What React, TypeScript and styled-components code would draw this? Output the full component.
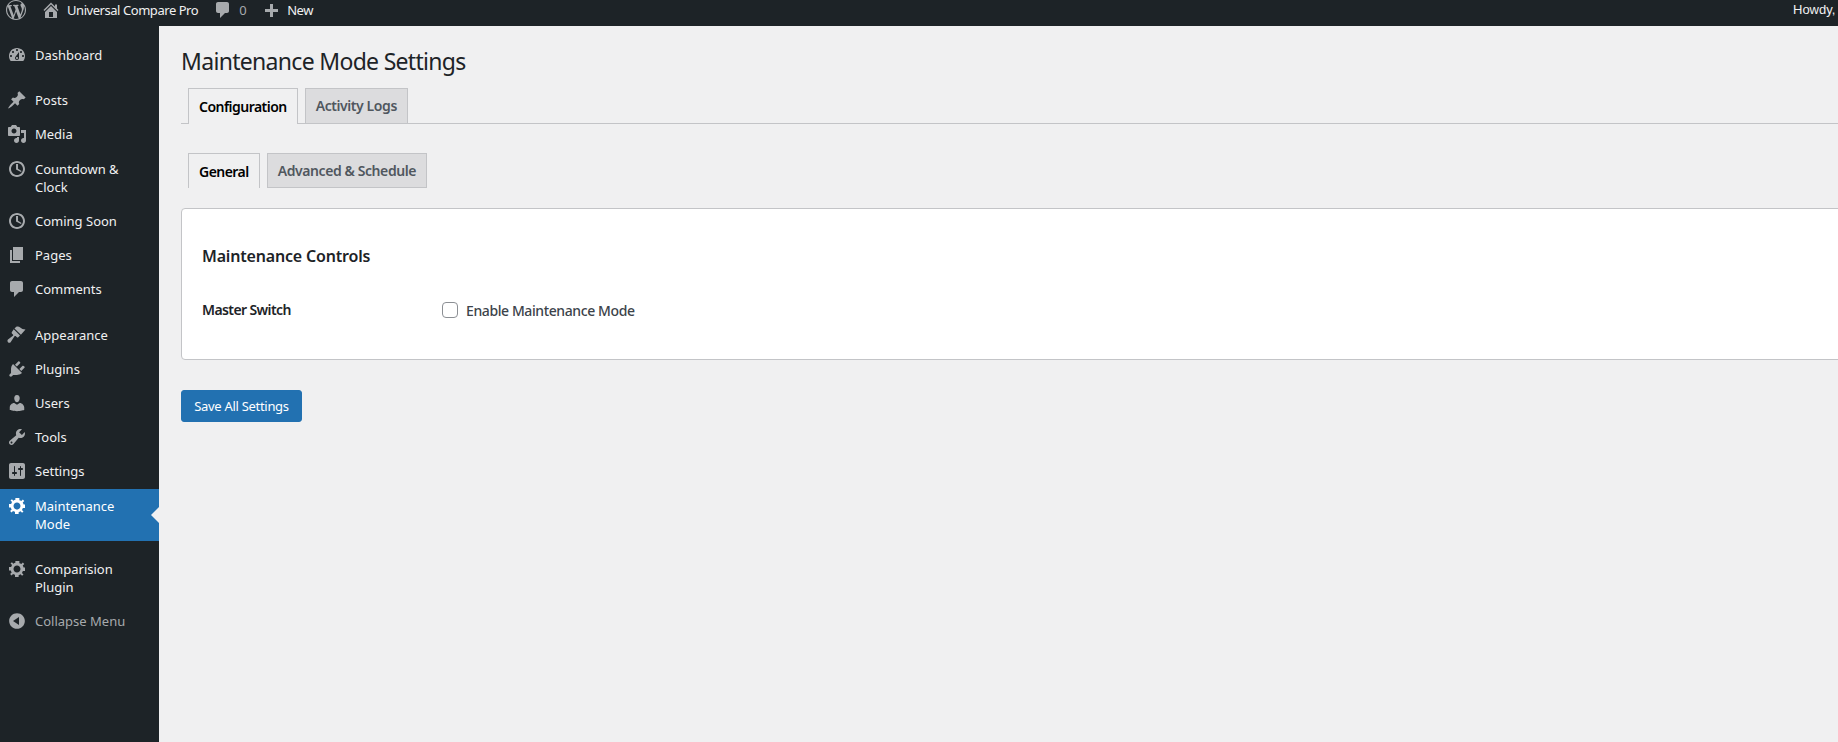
import styled, { createGlobalStyle } from "styled-components";

const GlobalStyle = createGlobalStyle`
  html, body {
    margin: 0;
    padding: 0;
    background: #f0f0f1;
  }
  * {
    box-sizing: border-box;
  }
`;

const icons: Record<string, string> = {
  wordpress:
    "M20 10c0-5.51-4.49-10-10-10C4.48 0 0 4.49 0 10c0 5.52 4.48 10 10 10 5.51 0 10-4.48 10-10zM7.78 15.37L4.37 6.22c.55-.02 1.17-.08 1.17-.08.5-.06.44-1.13-.06-1.11 0 0-1.45.11-2.37.11-.18 0-.37 0-.58-.01C4.12 2.69 6.87 1.11 10 1.11c2.33 0 4.45.87 6.05 2.34-.68-.11-1.65.39-1.65 1.58 0 .74.45 1.36.9 2.1.35.61.55 1.36.55 2.46 0 1.49-1.4 5-1.4 5l-3.03-8.35c.54-.02.82-.17.82-.17.5-.05.44-1.25-.06-1.22 0 0-1.44.12-2.38.12-.87 0-2.33-.12-2.33-.12-.5-.03-.56 1.2-.06 1.22l.92.08 1.26 3.41zM17.41 10c.24-.64.74-1.87.43-4.25.7 1.29 1.05 2.71 1.05 4.25 0 3.29-1.73 6.24-4.4 7.78.97-2.59 1.94-5.2 2.92-7.78zM6.1 18.09C3.12 16.65 1.11 13.53 1.11 10c0-1.3.23-2.48.72-3.59C3.25 10.3 4.67 14.2 6.1 18.09zm4.03-6.63l2.58 6.98c-.87.28-1.76.45-2.71.45-.79 0-1.57-.11-2.29-.33.81-2.38 1.62-4.73 2.42-7.1z",
  home:
    "M16 8.5l1.53 1.53-1.06 1.06L10 4.62l-6.47 6.47-1.06-1.06L10 2.5l4 4v-2h2v4zm-6-2.46l6 5.99V18H4v-5.97zM12 17v-5H8v5h4z",
  comment:
    "M5 2h9c1.1 0 2 .9 2 2v7c0 1.1-.9 2-2 2h-2l-5 5v-5H5c-1.1 0-2-.9-2-2V4c0-1.1.9-2 2-2z",
  plus: "M17 9v3h-5v5H9v-5H4V9h5V4h3v5h5z",
  dashboard:
    "M3.76 16h12.48c1.1-1.37 1.76-3.11 1.76-5 0-4.42-3.58-8-8-8s-8 3.58-8 8c0 1.89.66 3.63 1.76 5zM10 4c.55 0 1 .45 1 1s-.45 1-1 1-1-.45-1-1 .45-1 1-1zM6 6c.55 0 1 .45 1 1s-.45 1-1 1-1-.45-1-1 .45-1 1-1zm8 0c.55 0 1 .45 1 1s-.45 1-1 1-1-.45-1-1 .45-1 1-1zm-5.37 5.55L12 7v6c0 1.1-.9 2-2 2s-2-.9-2-2c0-.57.24-1.08.63-1.45zM4 10c.55 0 1 .45 1 1s-.45 1-1 1-1-.45-1-1 .45-1 1-1zm12 0c.55 0 1 .45 1 1s-.45 1-1 1-1-.45-1-1 .45-1 1-1zm-5 3c0-.55-.45-1-1-1s-1 .45-1 1 .45 1 1 1 1-.45 1-1z",
  post:
    "M10.44 3.02l1.82-1.82 6.36 6.35-1.83 1.82c-1.05-.68-2.48-.57-3.41.36l-.75.75c-.92.93-1.04 2.35-.35 3.41l-1.83 1.82-2.41-2.41-2.8 2.79c-.42.42-3.38 2.71-3.8 2.29s1.86-3.39 2.28-3.81l2.79-2.79L4.1 9.36l1.83-1.82c1.05.69 2.48.57 3.4-.36l.75-.75c.93-.92 1.05-2.35.36-3.41z",
  media:
    "M13 11V4c0-.55-.45-1-1-1h-1.67L9 1H5L3.67 3H2c-.55 0-1 .45-1 1v7c0 .55.45 1 1 1h10c.55 0 1-.45 1-1zM7 4.5c1.38 0 2.5 1.12 2.5 2.5S8.38 9.5 7 9.5 4.5 8.38 4.5 7 5.62 4.5 7 4.5zM14 6h5v10.5c0 1.38-1.12 2.5-2.5 2.5S14 17.88 14 16.5s1.12-2.5 2.5-2.5c.17 0 .34.02.5.05V9h-3V6zm-4 8.05V13h2v3.5c0 1.38-1.12 2.5-2.5 2.5S7 17.88 7 16.5 8.12 14 9.5 14c.17 0 .34.02.5.05z",
  clock:
    "M10 2c4.42 0 8 3.58 8 8s-3.58 8-8 8-8-3.58-8-8 3.58-8 8-8zm0 14c3.31 0 6-2.69 6-6s-2.69-6-6-6-6 2.69-6 6 2.69 6 6 6zm-.71-5.29c.07.05.14.1.23.15L14 13l.5-.9-3.47-2.4V5h-2v5c0 .27.1.52.26.71z",
  page: "M6 15V2h10v13H6zm-1 1h8v2H3V5h2v11z",
  appearance:
    "M7.5 3.5L9 2c1.5-.8 3.2-.3 4.2.6 1.4 1.3 3 2 5.3 2l-4.6 5.2zM6.7 4.3L13 10.6l-1.7 1.7c-.4.4-1 .4-1.4 0l-1-1c-.5-.5-1-.4-1.4 0l-3.9 5.9c-.7.7-1.9.7-2.6 0s-.7-1.9 0-2.6l4.9-3.8c.4-.4.5-1 0-1.4l-1-1c-.4-.4-.4-1 0-1.4z",
  plugin:
    "M13.11 4.36L9.87 7.6 8 5.73l3.24-3.24c.35-.34 1.05-.2 1.56.32.52.51.66 1.21.31 1.55zm-8 1.77l.91-1.12 9.01 9.01-1.19.84c-.71.71-2.63 1.16-3.82 1.16H6.14L4.9 17.26c-.59.59-1.54.59-2.12 0-.59-.58-.59-1.53 0-2.12l1.24-1.24v-3.88c0-1.13.4-3.05 1.09-3.89zm7.26 3.97l3.24-3.24c.34-.35 1.04-.21 1.55.31.52.51.66 1.21.31 1.55l-3.24 3.25z",
  users:
    "M10 9.25c-2.27 0-2.73-3.44-2.73-3.44C7 4.02 7.82 2 9.97 2c2.16 0 2.98 2.02 2.71 3.81 0 0-.41 3.44-2.68 3.44zm0 2.57L12.72 10c2.39 0 4.52 2.33 4.52 4.53v2.49s-3.65 1.13-7.24 1.13c-3.65 0-7.24-1.13-7.24-1.13v-2.49c0-2.25 1.94-4.48 4.47-4.48z",
  tools:
    "M16.68 9.77c-1.34 1.34-3.3 1.67-4.95.99l-5.41 6.52c-.99.99-2.59.99-3.58 0s-.99-2.59 0-3.57l6.52-5.42c-.68-1.65-.35-3.61.99-4.95 1.28-1.28 3.12-1.62 4.72-1.06l-2.89 2.89 2.82 2.82 2.86-2.87c.53 1.58.18 3.42-1.08 4.67zM3.81 16.21c.4.39 1.04.39 1.43 0 .4-.4.4-1.04 0-1.43-.39-.4-1.03-.4-1.43 0-.39.39-.39 1.03 0 1.43z",
  settings:
    "M18 16V4c0-1.1-.9-2-2-2H4c-1.1 0-2 .9-2 2v12c0 1.1.9 2 2 2h12c1.1 0 2-.9 2-2zM8 11h1c.55 0 1 .45 1 1s-.45 1-1 1H8v1.5c0 .28-.22.5-.5.5s-.5-.22-.5-.5V13H6c-.55 0-1-.45-1-1s.45-1 1-1h1V5.5c0-.28.22-.5.5-.5s.5.22.5.5V11zm5-2h-1c-.55 0-1-.45-1-1s.45-1 1-1h1V5.5c0-.28.22-.5.5-.5s.5.22.5.5V7h1c.55 0 1 .45 1 1s-.45 1-1 1h-1v5.5c0 .28-.22.5-.5.5s-.5-.22-.5-.5V9z",
  gear:
    "M18 12h-2.18c-.17.7-.47 1.35-.87 1.92l1.54 1.54-1.41 1.41-1.54-1.54c-.57.4-1.22.7-1.92.87V18H8v-2.18c-.7-.17-1.35-.47-1.92-.87l-1.54 1.54-1.41-1.41 1.54-1.54c-.4-.57-.7-1.22-.87-1.92H2V8h2.18c.17-.7.47-1.35.87-1.92L3.51 4.54l1.41-1.41 1.54 1.54c.57-.4 1.22-.7 1.92-.87V2h4v2.18c.7.17 1.35.47 1.92.87l1.54-1.54 1.41 1.41-1.54 1.54c.4.57.7 1.22.87 1.92H18v4zm-8 1.5c1.93 0 3.5-1.57 3.5-3.5S11.93 6.5 10 6.5 6.5 8.07 6.5 10s1.57 3.5 3.5 3.5z",
  collapse:
    "M10 2.16c4.33 0 7.84 3.51 7.84 7.84s-3.51 7.84-7.84 7.84S2.16 14.33 2.16 10 5.67 2.16 10 2.16zM12 14V6l-6 4z",
};

const FONT = `"Noto Sans", "Open Sans", sans-serif`;

const Page = styled.div`
  display: flex;
  flex-direction: column;
  width: 100vw;
  height: 100vh;
  overflow: hidden;
  font-family: ${FONT};
  font-size: 13px;
  color: #1d2327;
`;

const AdminBar = styled.header`
  flex: 0 0 26px;
  display: flex;
  align-items: flex-start;
  background: #1d2327;
  color: #f0f0f1;
  letter-spacing: -0.45px;
  line-height: 20px;
  padding-left: 6px;
`;

const BarIcon = styled.svg<{ $size?: number }>`
  display: block;
  width: ${(p) => p.$size ?? 20}px;
  height: ${(p) => p.$size ?? 20}px;
  flex: none;
  fill: #a7aaad;
`;

const BarItem = styled.div<{ $left: number; $gap: number }>`
  display: flex;
  align-items: center;
  height: 20px;
  margin-left: ${(p) => p.$left}px;
  gap: ${(p) => p.$gap}px;
`;

const Muted = styled.span`
  color: #a7aaad;
`;

const Howdy = styled.div`
  margin-left: auto;
  width: 45px;
  white-space: nowrap;
  font-family: "Liberation Sans", Arial, sans-serif;
  letter-spacing: 0;
`;

const Body = styled.div`
  flex: 1;
  display: flex;
  min-height: 0;
`;

const Sidebar = styled.nav`
  flex: 0 0 159px;
  background: #1d2327;
  padding-top: 12px;
`;

const MenuItem = styled.a<{ $active?: boolean; $dim?: boolean }>`
  position: relative;
  display: flex;
  padding: 8px 12px 8px 0;
  line-height: 18.2px;
  color: ${(p) => (p.$active ? "#fff" : p.$dim ? "#a7aaad" : "#f0f0f1")};
  background: ${(p) => (p.$active ? "#2271b1" : "transparent")};

  svg {
    fill: ${(p) => (p.$active ? "#fff" : "#a7aaad")};
  }

  ${(p) =>
    p.$active &&
    `&::after {
      content: "";
      position: absolute;
      right: 0;
      top: 50%;
      margin-top: -8px;
      border: 8px solid transparent;
      border-right-color: #f0f0f1;
      border-left-width: 0;
    }`}
`;

const MenuIcon = styled.svg`
  display: block;
  flex: none;
  width: 20px;
  height: 20px;
  margin: -1px 8px -1px 7px;
`;

const Separator = styled.div`
  height: 11px;
`;

const Content = styled.main`
  flex: 1;
  min-width: 0;
  overflow: hidden;
  padding-left: 22px;
`;

const Wrap = styled.div`
  width: 1750px;
`;

const Title = styled.h1`
  margin: 0;
  padding-top: 20px;
  font-size: 23px;
  font-weight: 400;
  line-height: 30px;
  letter-spacing: -0.69px;
  color: #1d2327;
`;

const TabRow = styled.div<{ $top: number; $line?: boolean }>`
  display: flex;
  gap: 7px;
  margin-top: ${(p) => p.$top}px;
  padding-left: 7px;
  height: 36px;
  border-bottom: ${(p) => (p.$line ? "1px solid #c3c4c7" : "0")};
`;

const Tab = styled.div<{ $active?: boolean; $tall?: boolean }>`
  height: ${(p) => (p.$tall ? 36 : 35)}px;
  padding: 0 10px ${(p) => (p.$tall ? 1 : 0)}px;
  display: flex;
  align-items: center;
  font-size: 14px;
  font-weight: 600;
  letter-spacing: ${(p) => (p.$active ? "-0.53px" : "-0.42px")};
  white-space: nowrap;
  border: 1px solid #c3c4c7;
  border-bottom: ${(p) => (p.$active ? "0" : "1px solid #c3c4c7")};
  background: ${(p) => (p.$active ? "#f0f0f1" : "#dcdcde")};
  color: ${(p) => (p.$active ? "#000" : "#50575e")};
`;

const Card = styled.section`
  margin-top: 19px;
  height: 152px;
  padding: 35px 20px 0;
  background: #fff;
  border: 1px solid #c3c4c7;
  border-radius: 4px;
`;

const CardTitle = styled.h2`
  margin: 0 0 28px;
  font-size: 16px;
  font-weight: 600;
  line-height: 24px;
  letter-spacing: -0.18px;
  color: #1d2327;
`;

const FieldRow = styled.div`
  display: grid;
  grid-template-columns: 240px 1fr;
  align-items: center;
  height: 28px;
`;

const FieldLabel = styled.div`
  font-size: 14px;
  font-weight: 600;
  letter-spacing: -0.6px;
  margin-top: -2px;
  color: #1d2327;
`;

const CheckLabel = styled.label`
  display: flex;
  align-items: center;
  gap: 8px;
  font-size: 14px;
  font-weight: 500;
  letter-spacing: -0.4px;
  color: #3c434a;
`;

const CheckBox = styled.input`
  appearance: none;
  display: block;
  width: 16px;
  height: 16px;
  margin: 0;
  background: #fff;
  border: 1px solid #8c8f94;
  border-radius: 4px;
`;

const SaveButton = styled.button`
  display: block;
  margin-top: 30px;
  width: 121px;
  height: 32px;
  padding: 0;
  font-family: ${FONT};
  font-size: 13px;
  letter-spacing: -0.3px;
  color: #fff;
  background: #2271b1;
  border: 1px solid #2271b1;
  border-radius: 3px;
`;

const Icon = ({ name }: { name: string }) => (
  <MenuIcon viewBox="0 0 20 20">
    <path d={icons[name]} fillRule="evenodd" />
  </MenuIcon>
);

const BarGlyph = ({ name, size }: { name: string; size?: number }) => (
  <BarIcon viewBox="0 0 20 20" $size={size}>
    <path d={icons[name]} fillRule="evenodd" />
  </BarIcon>
);

type Entry = { icon: string; label: string; active?: boolean; dim?: boolean } | "sep";

const menu: Entry[] = [
  { icon: "dashboard", label: "Dashboard" },
  "sep",
  { icon: "post", label: "Posts" },
  { icon: "media", label: "Media" },
  { icon: "clock", label: "Countdown & Clock" },
  { icon: "clock", label: "Coming Soon" },
  { icon: "page", label: "Pages" },
  { icon: "comment", label: "Comments" },
  "sep",
  { icon: "appearance", label: "Appearance" },
  { icon: "plugin", label: "Plugins" },
  { icon: "users", label: "Users" },
  { icon: "tools", label: "Tools" },
  { icon: "settings", label: "Settings" },
  { icon: "gear", label: "Maintenance Mode", active: true },
  "sep",
  { icon: "gear", label: "Comparision Plugin" },
  { icon: "collapse", label: "Collapse Menu", dim: true },
];

export default function App() {
  return (
    <Page>
      <GlobalStyle />
      <AdminBar>
        <BarGlyph name="wordpress" />
        <BarItem $left={15} $gap={6}>
          <BarGlyph name="home" />
          <span>Universal Compare Pro</span>
        </BarItem>
        <BarItem $left={15} $gap={6}>
          <BarGlyph name="comment" />
          <Muted>0</Muted>
        </BarItem>
        <BarItem $left={15} $gap={6}>
          <BarGlyph name="plus" />
          <span>New</span>
        </BarItem>
        <Howdy>Howdy,</Howdy>
      </AdminBar>
      <Body>
        <Sidebar>
          {menu.map((m, i) =>
            m === "sep" ? (
              <Separator key={i} />
            ) : (
              <MenuItem key={m.label} $active={m.active} $dim={m.dim}>
                <Icon name={m.icon} />
                <span>{m.label}</span>
              </MenuItem>
            )
          )}
        </Sidebar>
        <Content>
          <Wrap>
            <Title>Maintenance Mode Settings</Title>
            <TabRow $top={12} $line>
              <Tab $active $tall>Configuration</Tab>
              <Tab $tall>Activity Logs</Tab>
            </TabRow>
            <TabRow $top={29}>
              <Tab $active>General</Tab>
              <Tab>Advanced &amp; Schedule</Tab>
            </TabRow>
            <Card>
              <CardTitle>Maintenance Controls</CardTitle>
              <FieldRow>
                <FieldLabel>Master Switch</FieldLabel>
                <CheckLabel>
                  <CheckBox type="checkbox" />
                  Enable Maintenance Mode
                </CheckLabel>
              </FieldRow>
            </Card>
            <SaveButton type="button">Save All Settings</SaveButton>
          </Wrap>
        </Content>
      </Body>
    </Page>
  );
}
